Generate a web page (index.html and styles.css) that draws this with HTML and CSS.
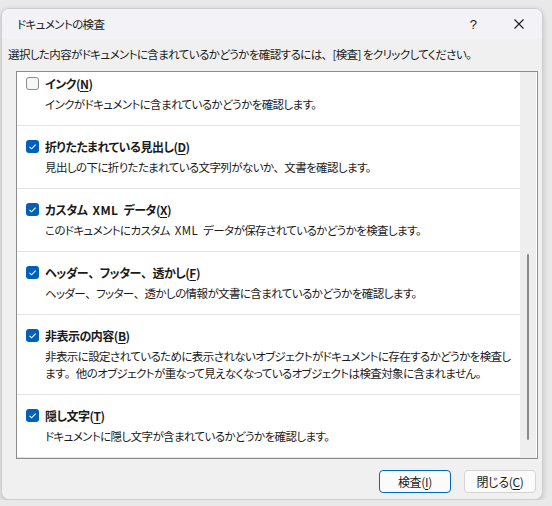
FILE: index.html
```html
<!DOCTYPE html>
<html lang="ja">
<head>
  <meta charset="UTF-8">
  <meta name="viewport" content="width=device-width, initial-scale=1.0">
  <title>ドキュメントの検査</title>
  <link rel="stylesheet" href="styles.css">
</head>
<body>
  <div class="window">
    <div class="titlebar">
      <span class="title">ドキュメントの検査</span>
      <span class="help">?</span>
      <span class="close">
        <svg width="10" height="10" viewBox="0 0 10 10"><path d="M0.5 0.5 L9.5 9.5 M9.5 0.5 L0.5 9.5" stroke="#1b1b1b" stroke-width="1.1" fill="none"/></svg>
      </span>
    </div>

    <p class="intro">選択した内容がドキュメントに含まれているかどうかを確認するには<span class="wide">、</span>[検査] をクリックしてください。</p>

    <div class="list">
      <div class="viewport">
        <ul class="items">
          <li class="item">
            <div class="head"><span class="check"></span><span class="name">インク(<u>N</u>)</span></div>
            <div class="desc">インクがドキュメントに含まれているかどうかを確認します。</div>
          </li>
          <li class="item">
            <div class="head"><span class="check on"><svg width="13" height="13" viewBox="0 0 13 13"><path d="M3.5 6.8 L5.6 8.8 L9.6 4.6" stroke="#fff" stroke-width="1.1" fill="none"/></svg></span><span class="name">折りたたまれている見出し(<u>D</u>)</span></div>
            <div class="desc">見出しの下に折りたたまれている文字列がないか<span class="wide">、</span>文書を確認します。</div>
          </li>
          <li class="item">
            <div class="head"><span class="check on"><svg width="13" height="13" viewBox="0 0 13 13"><path d="M3.5 6.8 L5.6 8.8 L9.6 4.6" stroke="#fff" stroke-width="1.1" fill="none"/></svg></span><span class="name">カスタム<span class="latin"> XML </span>データ(<u>X</u>)</span></div>
            <div class="desc">このドキュメントにカスタム<span class="latin"> XML </span>データが保存されているかどうかを検査します。</div>
          </li>
          <li class="item">
            <div class="head"><span class="check on"><svg width="13" height="13" viewBox="0 0 13 13"><path d="M3.5 6.8 L5.6 8.8 L9.6 4.6" stroke="#fff" stroke-width="1.1" fill="none"/></svg></span><span class="name">ヘッダー<span class="wide">、</span>フッター<span class="wide">、</span>透かし(<u>F</u>)</span></div>
            <div class="desc">ヘッダー<span class="wide">、</span>フッター<span class="wide">、</span>透かしの情報が文書に含まれているかどうかを確認します。</div>
          </li>
          <li class="item">
            <div class="head"><span class="check on"><svg width="13" height="13" viewBox="0 0 13 13"><path d="M3.5 6.8 L5.6 8.8 L9.6 4.6" stroke="#fff" stroke-width="1.1" fill="none"/></svg></span><span class="name">非表示の内容(<u>B</u>)</span></div>
            <div class="desc">非表示に設定されているために表示されないオブジェクトがドキュメントに存在するかどうかを検査し<br>ます<span class="wide">。</span>他のオブジェクトが重なって見えなくなっているオブジェクトは検査対象に含まれません。</div>
          </li>
          <li class="item">
            <div class="head"><span class="check on"><svg width="13" height="13" viewBox="0 0 13 13"><path d="M3.5 6.8 L5.6 8.8 L9.6 4.6" stroke="#fff" stroke-width="1.1" fill="none"/></svg></span><span class="name">隠し文字(<u>T</u>)</span></div>
            <div class="desc">ドキュメントに隠し文字が含まれているかどうかを確認します。</div>
          </li>
        </ul>
      </div>
      <div class="scrollbar"><span class="thumb"></span></div>
    </div>

    <div class="buttons">
      <button class="btn default">検査(<u>I</u>)</button>
      <button class="btn">閉じる(<u>C</u>)</button>
    </div>
  </div>
</body>
</html>
```

FILE: styles.css
```css
* {
  box-sizing: border-box;
}
body {
  margin: 0;
  background-color: #e9e9e9;
  font-family: "Noto Sans CJK JP", "Noto Sans", sans-serif;
  font-size: 11.5px;
  font-feature-settings: "palt";
  letter-spacing: -0.6px;
  color: #1b1b1b;
}
ul {
  padding: 0;
  margin: 0;
}
ul li {
  list-style: none;
}
u {
  text-decoration-thickness: 1px;
  text-underline-offset: 2px;
}
.wide {
  font-feature-settings: normal;
}
.latin {
  letter-spacing: 0.4px;
  word-spacing: 2px;
}
.window {
  margin: 8px 0 0 1px;
  width: 542px;
  height: 492px;
  background-color: #f0f0f0;
  border: 1px solid #cfcfcf;
  border-radius: 8px;
  overflow: hidden;
  box-shadow: 0 2px 6px rgba(0, 0, 0, 0.18);
}
.titlebar {
  display: flex;
  align-items: center;
  height: 30px;
  padding-left: 15px;
  background-color: #f3f3f7;
}
.title {
  flex: 1;
}
.help {
  width: 46px;
  text-align: center;
  font-family: "Liberation Sans", sans-serif;
  font-size: 13px;
}
.close {
  display: flex;
  justify-content: center;
  width: 46px;
}
.intro {
  margin: 0;
  padding: 7px 6px 8px;
  line-height: 17px;
  white-space: nowrap;
}
.list {
  display: flex;
  margin-left: 14px;
  width: 522px;
  height: 388px;
  background-color: #fff;
  border: 1px solid #8d8d8d;
}
.viewport {
  flex: 1;
  overflow: hidden;
}
.items {
  margin-top: -9px;
}
.item {
  padding: 12px 0 12px 9px;
  border-bottom: 1px solid #e3e3e3;
}
.head {
  display: flex;
  align-items: center;
  height: 17px;
}
.check {
  flex: none;
  width: 13px;
  height: 13px;
  margin-right: 6px;
  border: 1px solid #8b8b8b;
  border-radius: 3px;
  background-color: #f7f7f7;
}
.check.on {
  border: none;
  background-color: #005fb8;
}
.check svg {
  display: block;
}
.name {
  font-size: 12px;
  font-weight: bold;
  letter-spacing: -0.5px;
  line-height: 17px;
}
.desc {
  margin-top: 4px;
  padding-left: 19px;
  line-height: 17px;
  white-space: nowrap;
}
.scrollbar {
  display: flex;
  flex-direction: column;
  align-items: center;
  width: 16px;
  margin-right: 1px;
  padding-top: 182px;
  background-color: #eeeeee;
}
.thumb {
  width: 2px;
  height: 186px;
  border-radius: 1px;
  background-color: #8a8a8a;
}
.buttons {
  display: flex;
  justify-content: flex-end;
  gap: 13px;
  padding: 11px 6px 0 0;
}
.btn {
  width: 72px;
  height: 23px;
  padding: 0;
  font-family: inherit;
  font-size: 12px;
  font-feature-settings: "palt";
  letter-spacing: -0.3px;
  color: #1b1b1b;
  background-color: #fbfbfb;
  border: 1px solid #d3d3d3;
  border-radius: 4px;
}
.btn.default {
  border-color: #0067c0;
}
```
